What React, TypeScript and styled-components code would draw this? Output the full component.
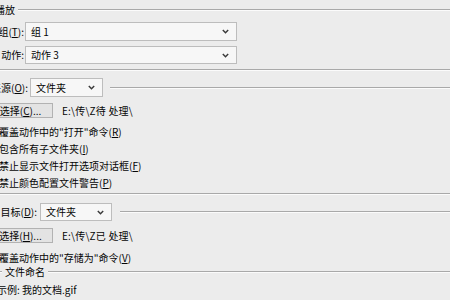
import React from 'react';
import styled, { createGlobalStyle } from 'styled-components';

const GlobalStyle = createGlobalStyle`
  html, body {
    margin: 0;
    padding: 0;
    background: #ececec;
    overflow: hidden;
  }
  body {
    font-family: 'Noto Sans CJK SC', 'Noto Sans', sans-serif;
    font-size: 10px;
    color: #050505;
  }
`;

// the dialog is cropped on the left, so the whole sheet sits 20px off-screen
const Sheet = styled.div`
  width: 470px;
  margin-left: -20px;
  padding-top: 3px;
  display: flex;
  flex-direction: column;
`;

const Rule = styled.div`
  flex: 1;
  height: 0;
  border-top: 1px solid #a9a9a9;
  border-bottom: 1px solid #fbfbfb;
`;

const ShortRule = styled(Rule)<{ w: number }>`
  flex: none;
  width: ${(p) => p.w}px;
`;

const GroupTitle = styled.div<{ indent: number; top?: number }>`
  display: flex;
  align-items: center;
  gap: 3px;
  height: 14px;
  margin-top: ${(p) => p.top ?? 0}px;
  padding-left: ${(p) => p.indent}px;
  line-height: 1;
  white-space: nowrap;
`;

const Divider = styled.div<{ top: number }>`
  margin-top: ${(p) => p.top}px;
  border-top: 1px solid #a9a9a9;
  border-bottom: 1px solid #fbfbfb;
`;

const FieldRow = styled.div<{ top: number; gap: number }>`
  display: flex;
  align-items: center;
  gap: ${(p) => p.gap}px;
  margin-top: ${(p) => p.top}px;
`;

const Label = styled.div<{ w: number }>`
  width: ${(p) => p.w}px;
  text-align: right;
  white-space: nowrap;
  line-height: 1;
`;

const SelectBox = styled.div<{ w: number; h: number }>`
  box-sizing: border-box;
  width: ${(p) => p.w}px;
  height: ${(p) => p.h}px;
  background: #f7f7f7;
  border: 1px solid #bdbdbd;
  display: flex;
  align-items: center;
  justify-content: space-between;
  padding: 0 7px 0 5px;
  line-height: 1;
  white-space: nowrap;
`;

const Chevron = () => (
  <svg width="7" height="5" viewBox="0 0 7 5">
    <polyline points="0.8,0.9 3.5,3.8 6.2,0.9" fill="none" stroke="#3a3a3a" strokeWidth="1.4" />
  </svg>
);

const Select = ({ value, w, h }: { value: string; w: number; h: number }) => (
  <SelectBox w={w} h={h}>
    <span>{value}</span>
    <Chevron />
  </SelectBox>
);

const TrailRule = styled(Rule)`
  margin-left: 5px;
`;

const PushButton = styled.div`
  box-sizing: border-box;
  margin-left: 8px;
  width: 65px;
  height: 15px;
  background: #e3e3e3;
  border: 1px solid #b2b2b2;
  display: flex;
  align-items: center;
  justify-content: center;
  line-height: 1;
  white-space: nowrap;
`;

const PathText = styled.div`
  line-height: 1;
  white-space: nowrap;
  letter-spacing: 0.2px;
`;

const CheckRow = styled.div<{ h: number }>`
  display: flex;
  align-items: center;
  gap: 4px;
  height: ${(p) => p.h}px;
  padding-left: 2px;
  line-height: 1;
  white-space: nowrap;
`;

const Box = styled.div`
  box-sizing: border-box;
  width: 13px;
  height: 13px;
  background: #fff;
  border: 1px solid #333;
`;

const Key = styled.span`
  text-decoration: underline;
`;

const Sample = styled.div`
  margin-top: 3px;
  height: 16px;
  padding-left: 17px;
  display: flex;
  align-items: center;
  line-height: 1;
  white-space: nowrap;
`;

const Check = ({ text, k }: { text: string; k: string }) => (
  <CheckRow h={17}>
    <Box />
    <span>
      {text}(<Key>{k}</Key>)
    </span>
  </CheckRow>
);

export default function App() {
  return (
    <>
      <GlobalStyle />
      <Sheet>
        <GroupTitle indent={15}>
          <span>播放</span>
          <Rule />
        </GroupTitle>

        <FieldRow top={5} gap={1}>
          <Label w={44}>
            组(<Key>T</Key>):
          </Label>
          <Select value="组 1" w={212} h={19} />
        </FieldRow>
        <FieldRow top={5} gap={1}>
          <Label w={44}>动作:</Label>
          <Select value="动作 3" w={212} h={18} />
        </FieldRow>

        <Divider top={5} />

        <FieldRow top={7} gap={2}>
          <Label w={48}>
            来源(<Key>O</Key>):
          </Label>
          <Select value="文件夹" w={73} h={19} />
          <TrailRule />
        </FieldRow>

        <FieldRow top={6} gap={9}>
          <PushButton>
            选择(<Key>C</Key>)...
          </PushButton>
          <PathText>E:\传\Z待 处理\</PathText>
        </FieldRow>

        <div style={{ marginTop: 5 }}>
          <Check text={'覆盖动作中的"打开"命令'} k="R" />
          <Check text="包含所有子文件夹" k="I" />
          <Check text="禁止显示文件打开选项对话框" k="F" />
          <Check text="禁止颜色配置文件警告" k="P" />
        </div>

        <Divider top={2} />

        <FieldRow top={8} gap={3}>
          <Label w={57}>
            目标(<Key>D</Key>):
          </Label>
          <Select value="文件夹" w={72} h={18} />
          <TrailRule />
        </FieldRow>

        <FieldRow top={7} gap={9}>
          <PushButton>
            选择(<Key>H</Key>)...
          </PushButton>
          <PathText>E:\传\Z已 处理\</PathText>
        </FieldRow>

        <CheckRow h={15} style={{ marginTop: 7 }}>
          <Box />
          <span>
            覆盖动作中的"存储为"命令(<Key>V</Key>)
          </span>
        </CheckRow>

        <GroupTitle indent={0}>
          <ShortRule w={22} />
          <span>文件命名</span>
          <Rule />
        </GroupTitle>

        <Sample>示例: 我的文档.gif</Sample>
      </Sheet>
    </>
  );
}
